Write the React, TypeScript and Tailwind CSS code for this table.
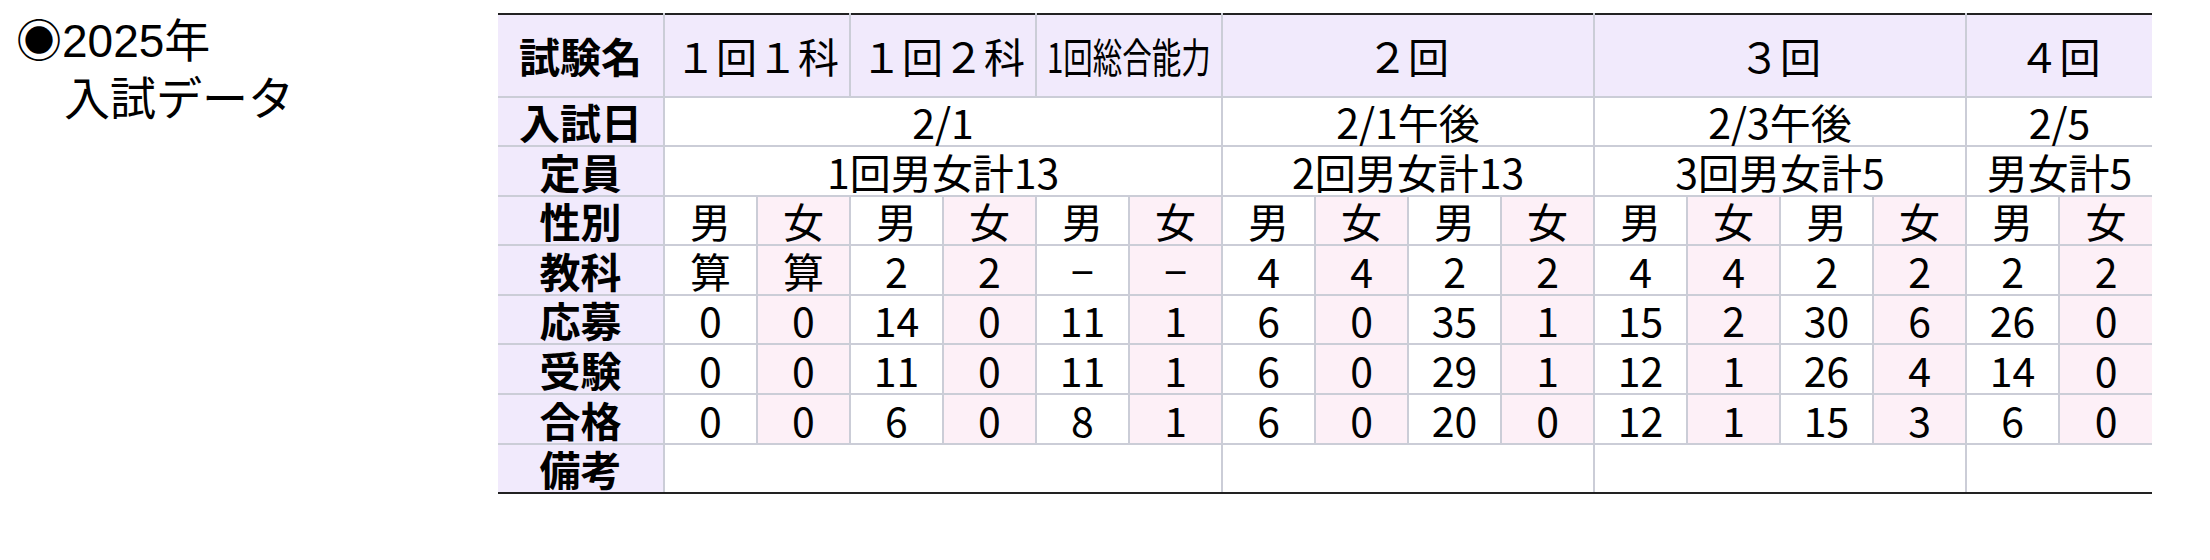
const male = "bg-white"
const female = "bg-[#fdf0f7]"

const subjects = ["算", "算", "2", "2", "−", "−", "4", "4", "2", "2", "4", "4", "2", "2", "2", "2"]
const rows: { label: string; values: string[]; h: string }[] = [
  { label: "応募", h: "h-[49px]", values: ["0", "0", "14", "0", "11", "1", "6", "0", "35", "1", "15", "2", "30", "6", "26", "0"] },
  { label: "受験", h: "h-[50px]", values: ["0", "0", "11", "0", "11", "1", "6", "0", "29", "1", "12", "1", "26", "4", "14", "0"] },
  { label: "合格", h: "h-[50px]", values: ["0", "0", "6", "0", "8", "1", "6", "0", "20", "0", "12", "1", "15", "3", "6", "0"] },
]
const spans = [6, 4, 4, 2]
const dates = ["2/1", "2/1午後", "2/3午後", "2/5"]
const quotas = ["1回男女計13", "2回男女計13", "3回男女計5", "男女計5"]

const td = "border-2 border-[#cbcdd7] p-0 text-center align-middle leading-none"
const label = `${td} border-l-0 bg-[#f1eafc] font-bold`
const top = "border-t-2 border-t-[#222]"
const bottom = "border-b-2 border-b-[#222]"

function DataRow({ name, values, h }: { name: string; values: string[]; h: string }) {
  return (
    <tr className={h}>
      <td className={label}>{name}</td>
      {values.map((v, i) => (
        <td
          key={i}
          className={`${td} ${i % 2 === 1 ? female : male} ${i === values.length - 1 ? "border-r-0" : ""}`}
        >
          {v}
        </td>
      ))}
    </tr>
  )
}

export default function App() {
  return (
    <div className="flex w-[2210px] h-[560px] bg-white text-black font-['Noto_Sans_CJK_JP',sans-serif]">
      <div className="w-[498px] shrink-0 pl-[16px] pt-[12px] text-[46px] leading-[58px] font-['Liberation_Sans','Noto_Sans_CJK_JP',sans-serif]">
        <div>◉2025年</div>
        <div className="pl-[48px]">入試データ</div>
      </div>
      <div className="pt-[13px]">
        <table className="table-fixed border-collapse w-[1654px] text-[41px]">
          <colgroup>
            <col className="w-[166px]" />
            {Array.from({ length: 16 }).map((_, i) => (
              <col key={i} className="w-[93px]" />
            ))}
          </colgroup>
          <tbody>
            <tr className="h-[83px] bg-[#f1eafc]">
              <td className={`${label} ${top}`}>試験名</td>
              <td colSpan={2} className={`${td} ${top}`}>１回１科</td>
              <td colSpan={2} className={`${td} ${top}`}>１回２科</td>
              <td colSpan={2} className={`${td} ${top}`}>
                <div className="flex justify-center whitespace-nowrap">
                  <span className="inline-block scale-x-[0.72]">1回総合能力</span>
                </div>
              </td>
              <td colSpan={4} className={`${td} ${top}`}>２回</td>
              <td colSpan={4} className={`${td} ${top}`}>３回</td>
              <td colSpan={2} className={`${td} ${top} border-r-0`}>４回</td>
            </tr>
            <tr className="h-[49px]">
              <td className={label}>入試日</td>
              {dates.map((d, i) => (
                <td key={i} colSpan={spans[i]} className={`${td} ${i === 3 ? "border-r-0" : ""}`}>
                  {d}
                </td>
              ))}
            </tr>
            <tr className="h-[50px]">
              <td className={label}>定員</td>
              {quotas.map((q, i) => (
                <td key={i} colSpan={spans[i]} className={`${td} ${i === 3 ? "border-r-0" : ""}`}>
                  {q}
                </td>
              ))}
            </tr>
            <DataRow name="性別" h="h-[49px]" values={Array.from({ length: 16 }).map((_, i) => (i % 2 ? "女" : "男"))} />
            <DataRow name="教科" h="h-[50px]" values={subjects} />
            {rows.map((r) => (
              <DataRow key={r.label} name={r.label} values={r.values} h={r.h} />
            ))}
            <tr className="h-[49px]">
              <td className={`${label} ${bottom}`}>備考</td>
              {spans.map((s, i) => (
                <td key={i} colSpan={s} className={`${td} ${bottom} ${i === 3 ? "border-r-0" : ""}`}></td>
              ))}
            </tr>
          </tbody>
        </table>
      </div>
    </div>
  )
}
